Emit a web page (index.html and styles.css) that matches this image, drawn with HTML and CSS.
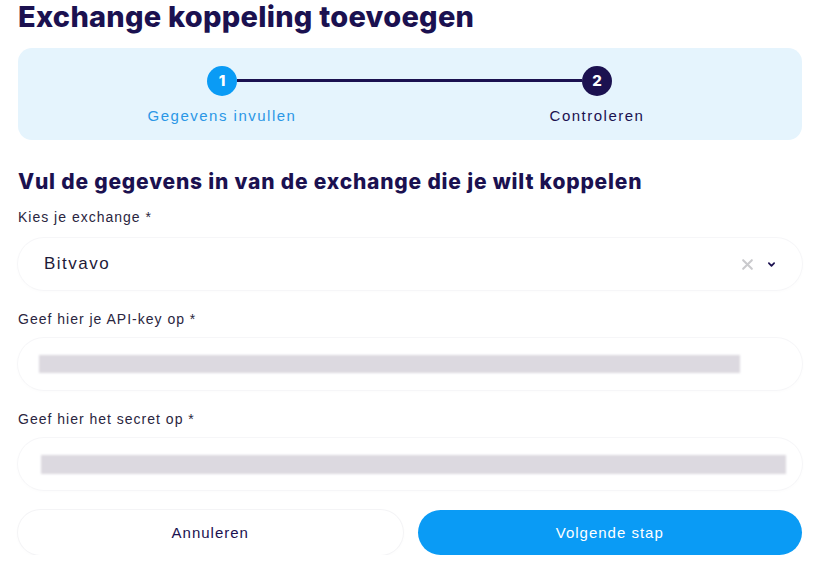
FILE: index.html
```html
<!DOCTYPE html>
<html lang="nl">
<head>
  <meta charset="UTF-8">
  <title>Exchange koppeling toevoegen</title>
  <link rel="stylesheet" href="styles.css">
</head>
<body>
  <div class="modal">
    <h1 class="title">Exchange koppeling toevoegen</h1>

    <div class="stepper">
      <div class="steps">
        <div class="step active">
          <span class="dot">1</span>
          <span class="label">Gegevens invullen</span>
        </div>
        <div class="line"></div>
        <div class="step">
          <span class="dot">2</span>
          <span class="label">Controleren</span>
        </div>
      </div>
    </div>

    <h2 class="subtitle">Vul de gegevens in van de exchange die je wilt koppelen</h2>

    <div class="field first">
      <label>Kies je exchange *</label>
      <div class="box select">
        <span class="value">Bitvavo</span>
        <span class="icons">
          <svg class="clear" width="13" height="13" viewBox="0 0 12 12"><path d="M2 2L10 10M10 2L2 10" stroke="#cacacd" stroke-width="1.9" stroke-linecap="round"/></svg>
          <svg class="chev" width="9" height="7" viewBox="0 0 10 8"><path d="M2 2.5L5 5.5L8 2.5" fill="none" stroke="#1b1150" stroke-width="2" stroke-linecap="round" stroke-linejoin="round"/></svg>
        </span>
      </div>
    </div>

    <div class="field">
      <label>Geef hier je API-key op *</label>
      <div class="box">
        <div class="blur" style="width: 701px"></div>
      </div>
    </div>

    <div class="field">
      <label>Geef hier het secret op *</label>
      <div class="box">
        <div class="blur secret" style="width: 745px"></div>
      </div>
    </div>

    <div class="actions">
      <button class="btn ghost">Annuleren</button>
      <button class="btn primary">Volgende stap</button>
    </div>
  </div>
</body>
</html>
```

FILE: styles.css
```css
html, body, h1, h2, label, button {
  padding: 0;
  margin: 0;
}
body {
  background: #fff;
  font-family: "Liberation Sans", Arial, sans-serif;
  color: #1b1150;
}
.modal {
  padding: 1px 18px 0 18px;
}
.title {
  font-family: "Inter", "Liberation Sans", sans-serif;
  font-size: 29px;
  font-weight: 800;
  line-height: 32px;
  letter-spacing: 0.25px;
  color: #1b1150;
}
.stepper {
  margin-top: 15px;
  height: 92px;
  background: #e5f4fd;
  border-radius: 14px;
}
.steps {
  display: flex;
  align-items: flex-start;
  padding: 18px 0 0 0;
  margin: 0 130px 0 129px;
}
.step {
  display: flex;
  flex-direction: column;
  align-items: center;
  width: 150px;
}
.dot {
  width: 30px;
  height: 30px;
  border-radius: 50%;
  background: #1b1150;
  color: #fff;
  font-family: "Inter", sans-serif;
  font-weight: 800;
  font-size: 15px;
  line-height: 30px;
  text-align: center;
}
.step.active .dot {
  background: #0a9bf5;
}
.label {
  margin-top: 11px;
  font-size: 15px;
  letter-spacing: 1.5px;
  color: #1b1150;
}
.step.active .label {
  color: #2b97e6;
}
.line {
  flex: 1;
  height: 3px;
  background: #1b1150;
  margin: 13px -60px 0 -60px;
}
.subtitle {
  margin-top: 30px;
  font-family: "Inter", "Liberation Sans", sans-serif;
  font-size: 21px;
  font-weight: 800;
  line-height: 24px;
  letter-spacing: 0.8px;
  color: #1b1150;
}
.field label {
  display: block;
  margin-top: 14px;
  font-size: 14px;
  line-height: 18px;
  letter-spacing: 1px;
  color: #2a2540;
}
.field + .field label {
  margin-top: 20px;
}
.box {
  display: flex;
  align-items: center;
  margin-top: 10px;
  height: 52px;
  border-radius: 26px;
  background: #fff;
  box-shadow: 0 0 0 1px #f6f6f8, 0 1px 4px rgba(30, 20, 80, 0.025);
  padding: 0 16px 0 21px;
}
.field.first .box {
  margin-top: 12px;
}
.select {
  padding-right: 26px;
}
.select .value {
  flex: 1;
  padding-left: 5px;
  font-size: 17px;
  letter-spacing: 1.5px;
  color: #1e1a38;
}
.icons {
  display: flex;
  align-items: center;
  gap: 13px;
}
.blur {
  flex-shrink: 0;
  height: 18px;
  background: #dcd9e0;
  filter: blur(1.2px);
}
.blur.secret {
  height: 19px;
  margin-left: 2px;
}
.actions {
  display: flex;
  gap: 15px;
  margin-top: 20px;
}
.btn {
  flex: 1;
  height: 45px;
  border-radius: 23px;
  border: none;
  font-family: "Liberation Sans", Arial, sans-serif;
  font-size: 15px;
  letter-spacing: 1px;
  cursor: pointer;
}
.btn.ghost {
  background: #fff;
  color: #1b1150;
  box-shadow: 0 0 0 1px #f4f4f6, 0 1px 4px rgba(30, 20, 80, 0.025);
}
.btn.primary {
  background: #0a9bf5;
  color: #fff;
}
```
